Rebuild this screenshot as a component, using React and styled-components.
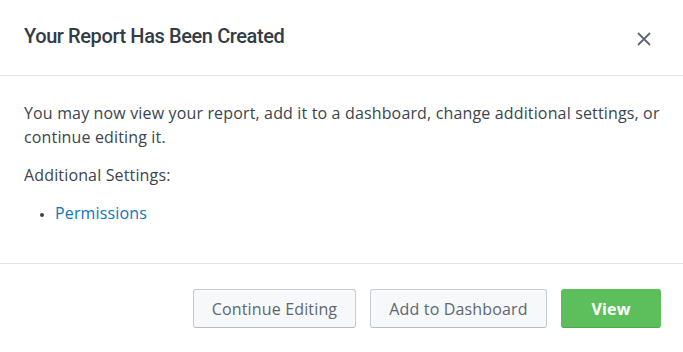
import React from "react";
import styled, { createGlobalStyle } from "styled-components";

const GlobalStyle = createGlobalStyle`
  html, body {
    margin: 0;
    padding: 0;
    background: #ffffff;
  }
  body {
    font-family: "Open Sans", "Liberation Sans", sans-serif;
    color: #3c444d;
  }
`;

const Modal = styled.div`
  width: 683px;
  height: 352px;
  display: flex;
  flex-direction: column;
  background: #ffffff;
`;

const Header = styled.div`
  height: 76px;
  box-sizing: border-box;
  display: flex;
  align-items: center;
  justify-content: space-between;
  padding: 0 31px 4px 24px;
  border-bottom: 1px solid #e1e6eb;
`;

const Title = styled.h2`
  margin: 0;
  font-family: Roboto, "Open Sans", sans-serif;
  font-size: 20px;
  font-weight: 500;
  color: #333b44;
  letter-spacing: -0.4px;
`;

const CloseButton = styled.button`
  border: none;
  background: none;
  padding: 0;
  margin-top: 6px;
  width: 16px;
  height: 16px;
  display: flex;
  align-items: center;
  justify-content: center;
  cursor: pointer;
`;

const Body = styled.div`
  height: 188px;
  box-sizing: border-box;
  padding: 25px 16px 0 24px;
  border-bottom: 1px solid #e1e6eb;
  font-size: 16px;
  letter-spacing: 0.15px;
  line-height: 24px;
`;

const Paragraph = styled.p`
  margin: 0 0 14px 0;
`;

const SettingsList = styled.ul`
  margin: 0;
  padding: 0 0 0 31px;
  list-style: disc;
`;

const SettingsItem = styled.li`
  &::marker {
    font-size: 12px;
  }
`;

const Link = styled.a`
  color: #0e77b8;
  text-decoration: none;
`;

const Footer = styled.div`
  flex: 1;
  display: flex;
  justify-content: flex-end;
  align-items: flex-start;
  gap: 14px;
  padding: 25px 22px 0 0;
`;

const Button = styled.button`
  height: 39px;
  width: ${(p) => p.width}px;
  box-sizing: border-box;
  padding: 0;
  border-radius: 3px;
  font-family: "Open Sans", "Liberation Sans", sans-serif;
  font-size: 16px;
  letter-spacing: 0.15px;
  font-weight: ${(p) => (p.primary ? 700 : 400)};
  color: ${(p) => (p.primary ? "#ffffff" : "#5c6773")};
  background: ${(p) => (p.primary ? "#5cbf5c" : "#f7f8fa")};
  border: 1px solid ${(p) => (p.primary ? "#5cbf5c" : "#c3cbd4")};
  border-bottom-color: ${(p) => (p.primary ? "#4ea84e" : "#b4bdc7")};
  cursor: pointer;
`;

const CloseIcon = () => (
  <svg width="14" height="14" viewBox="0 0 14 14">
    <path d="M1.5 1.5 L12.5 12.5 M12.5 1.5 L1.5 12.5" stroke="#5c6773" strokeWidth="1.8" strokeLinecap="round" />
  </svg>
);

export default function App() {
  return (
    <>
      <GlobalStyle />
      <Modal>
        <Header>
          <Title>Your Report Has Been Created</Title>
          <CloseButton aria-label="Close">
            <CloseIcon />
          </CloseButton>
        </Header>
        <Body>
          <Paragraph>
            You may now view your report, add it to a dashboard, change additional settings, or
            continue editing it.
          </Paragraph>
          <Paragraph>Additional Settings:</Paragraph>
          <SettingsList>
            <SettingsItem>
              <Link href="#">Permissions</Link>
            </SettingsItem>
          </SettingsList>
        </Body>
        <Footer>
          <Button width={163}>Continue Editing</Button>
          <Button width={177}>Add to Dashboard</Button>
          <Button primary width={100}>View</Button>
        </Footer>
      </Modal>
    </>
  );
}
